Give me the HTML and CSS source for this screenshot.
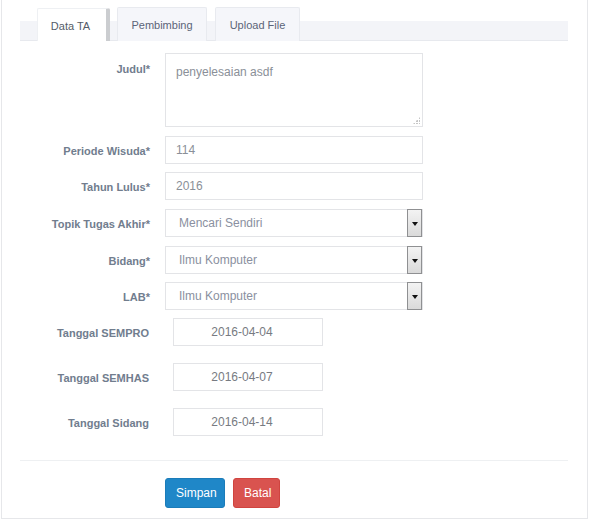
FILE: index.html
```html
<!DOCTYPE html>
<html>
<head>
<meta charset="utf-8">
<link rel="stylesheet" href="styles.css">
</head>
<body>
<div class="panel">
  <div class="tabs">
    <div class="tab active">Data TA</div>
    <div class="tab">Pembimbing</div>
    <div class="tab">Upload File</div>
  </div>
  <form class="form">
    <div class="row">
      <label class="lbl">Judul*</label>
      <div class="area-wrap">
        <textarea class="field area">penyelesaian asdf</textarea>
        <span class="grip"></span>
      </div>
    </div>
    <div class="row">
      <label class="lbl">Periode Wisuda*</label>
      <input class="field" type="text" value="114">
    </div>
    <div class="row">
      <label class="lbl">Tahun Lulus*</label>
      <input class="field" type="text" value="2016">
    </div>
    <div class="row">
      <label class="lbl">Topik Tugas Akhir*</label>
      <div class="field select">Mencari Sendiri<span class="arrow"></span></div>
    </div>
    <div class="row">
      <label class="lbl">Bidang*</label>
      <div class="field select">Ilmu Komputer<span class="arrow"></span></div>
    </div>
    <div class="row">
      <label class="lbl">LAB*</label>
      <div class="field select">Ilmu Komputer<span class="arrow"></span></div>
    </div>
    <div class="date-rows">
      <div class="drow">
        <label class="lbl">Tanggal SEMPRO</label>
        <input class="field date" type="text" value="2016-04-04">
      </div>
      <div class="drow">
        <label class="lbl">Tanggal SEMHAS</label>
        <input class="field date" type="text" value="2016-04-07">
      </div>
      <div class="drow">
        <label class="lbl">Tanggal Sidang</label>
        <input class="field date" type="text" value="2016-04-14">
      </div>
    </div>
    <div class="divider"></div>
    <div class="actions">
      <button type="button" class="btn btn-primary">Simpan</button>
      <button type="button" class="btn btn-danger">Batal</button>
    </div>
  </form>
</div>
</body>
</html>
```
FILE: styles.css
```css
* { box-sizing: border-box; }
html, body { margin: 0; padding: 0; background: #fff; }
body { font-family: "Liberation Sans", Arial, sans-serif; font-size: 12px; color: #555; }

.panel {
  margin-left: 1px;
  width: 587px;
  height: 519px;
  border: 1px solid #e6e7ea;
  border-top: none;
  padding: 0 18px 0 18px;
}

.tabs {
  display: flex;
  align-items: flex-end;
  height: 41px;
  padding-left: 17px;
  gap: 7px;
  background: linear-gradient(#fff 0, #fff 21px, #f3f4f8 21px, #f3f4f8 100%);
  border-bottom: 1px solid #e7e9ee;
  margin-right: 1px;
}
.tab {
  height: 34px;
  margin-bottom: -1px;
  display: flex;
  align-items: center;
  justify-content: center;
  font-size: 11px;
  color: #5b6478;
  background: #f5f6fa;
  border: 1px solid #e8eaef;
  border-bottom: none;
  border-radius: 2px 2px 0 0;
  padding-top: 1px;
}
.tab:nth-child(2) { width: 90px; }
.tab:nth-child(3) { width: 85px; margin-left: 1px; }
.tab.active {
  width: 73px;
  background: #fff;
  color: #555c68;
  border-color: #eef0f3;
  border-right: 4px solid #cbcdd0;
  height: 33px;
  padding-right: 3px;
}

.form { padding-top: 12px; }

.row {
  display: grid;
  grid-template-columns: 130px 258px;
  column-gap: 15px;
  align-items: start;
  margin-bottom: 8.7px;
}
.lbl {
  text-align: right;
  font-size: 11px;
  font-weight: bold;
  color: #717d8e;
  line-height: 14px;
  padding-top: 8px;
}
.field {
  display: block;
  width: 258px;
  height: 28px;
  border: 1px solid #e3e4e7;
  background: #fff;
  font-family: "Liberation Sans", Arial, sans-serif;
  font-size: 12px;
  color: #8a8f98;
  padding: 0 10px;
  margin: 0;
  outline: none;
  border-radius: 0;
}
.area-wrap { position: relative; width: 258px; height: 74px; }
.area {
  height: 74px;
  padding: 11px 10px;
  line-height: 14px;
  resize: none;
}
.grip {
  position: absolute;
  right: 3px;
  bottom: 3px;
  width: 7px;
  height: 7px;
  background:
    radial-gradient(circle at 1px 1px, #c4c4c4 0.7px, transparent 1px) 0 0 / 3px 3px;
  clip-path: polygon(100% 0, 100% 100%, 0 100%);
}
.row:first-child .lbl { padding-top: 9px; }

.select {
  position: relative;
  display: flex;
  align-items: center;
  padding-left: 13px;
  color: #8a90a0;
}
.arrow {
  position: absolute;
  right: 0;
  top: -1px;
  width: 15px;
  height: 28px;
  border: 1px solid #8f9092;
  background: linear-gradient(#f3f3f3, #dadada);
}
.arrow::after {
  content: "";
  position: absolute;
  left: 4px;
  top: 12px;
  border-left: 3px solid transparent;
  border-right: 3px solid transparent;
  border-top: 4px solid #111;
}

.date-rows {
  display: flex;
  flex-direction: column;
  gap: 17px;
  margin-top: -1.5px;
}
.drow {
  display: grid;
  grid-template-columns: 129px 150px;
  column-gap: 24px;
  align-items: start;
}
.field.date {
  width: 150px;
  text-align: center;
  padding: 0 12px 0 0;
  color: #777b82;
}

.divider {
  height: 1px;
  background: #eef0f2;
  margin: 24px 1px 17px 0;
}

.actions {
  display: flex;
  gap: 8px;
  padding-left: 145px;
}
.btn {
  height: 30px;
  border-radius: 3px;
  font-family: "Liberation Sans", Arial, sans-serif;
  font-size: 12px;
  color: #fff;
  padding: 0 10px;
  cursor: pointer;
}
.btn-primary { width: 60px; background: #1f87c8; border: 1px solid #1b7cb9; }
.btn-danger { width: 47px; background: #d9534f; border: 1px solid #d0443f; }
```
